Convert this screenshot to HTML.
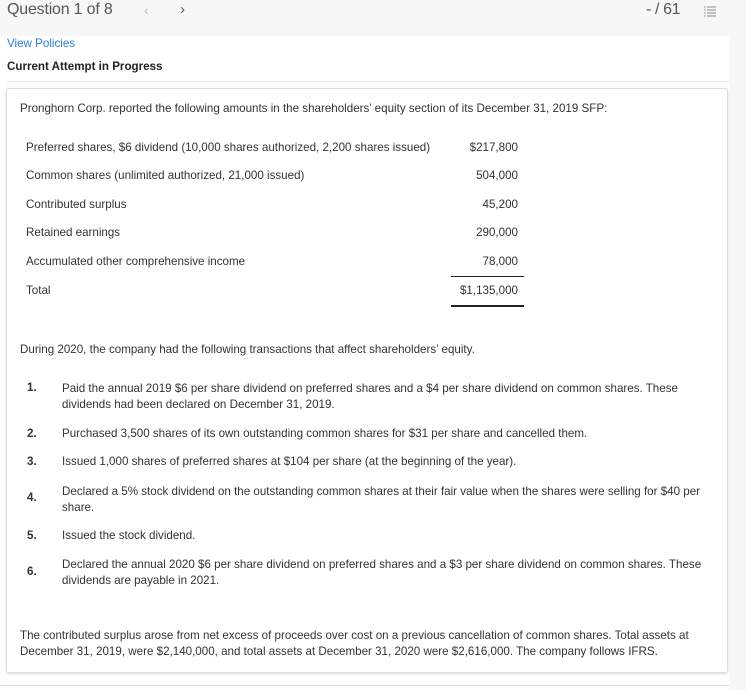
<!DOCTYPE html>
<html><head><style>
body{margin:0;width:746px;height:690px;background:#fff;font-family:"Liberation Sans",sans-serif;color:#333;position:relative;overflow:hidden}
.hdr{position:absolute;left:0;top:0;width:746px;height:36px;background:#f7f7f7}
.a{position:absolute;white-space:nowrap}
.t{font-size:11.6px;letter-spacing:0;color:#333}
.card{position:absolute;left:6px;top:88px;width:720px;height:583px;border:1px solid #ddd;border-radius:3px;box-shadow:0 1px 2px rgba(0,0,0,.15)}
.r{text-align:right;width:110px;left:408px}
</style></head><body>
<div class="hdr"></div>
<div style="position:absolute;left:729px;top:36px;width:17px;height:654px;background:#f7f7f7"></div>
<div class="a" style="left:7px;top:1px;font-size:16px;color:#555;letter-spacing:-0.2px">Question 1 of 8</div>
<div class="a" style="left:144px;top:2px;font-size:14px;color:#bbb">‹</div>
<div class="a" style="left:180px;top:1px;font-size:15px;color:#555">›</div>
<div class="a" style="left:646px;top:1px;font-size:16px;color:#555;letter-spacing:-0.4px">- / 61</div>
<svg class="a" style="left:703px;top:5px" width="14" height="14" viewBox="0 0 14 14"><g stroke="#888" stroke-width="1"><line x1="4" y1="2" x2="13" y2="2"/><line x1="4" y1="5" x2="13" y2="5"/><line x1="4" y1="8" x2="13" y2="8"/><line x1="4" y1="11" x2="13" y2="11"/><line x1="1" y1="2" x2="2.5" y2="2"/><line x1="1" y1="5" x2="2.5" y2="5"/><line x1="1" y1="8" x2="2.5" y2="8"/><line x1="1" y1="11" x2="2.5" y2="11"/></g></svg>
<div class="a t" style="left:7px;top:37px;color:#2a7fd4">View Policies</div>
<div class="a t" style="left:7px;top:60px;color:#222;font-weight:bold">Current Attempt in Progress</div>
<div style="position:absolute;left:7px;top:81px;width:722px;height:1px;background:#e5e5e5"></div>
<div class="card"></div>
<div style="position:absolute;left:0;top:685px;width:729px;height:1px;background:#ddd"></div>
<div class="a t" style="left:20px;top:102px">Pronghorn Corp. reported the following amounts in the shareholders’ equity section of its December 31, 2019 SFP:</div>
<div class="a t" style="left:26px;top:141px">Preferred shares, $6 dividend (10,000 shares authorized, 2,200 shares issued)</div>
<div class="a t r" style="top:141px">$217,800</div>
<div class="a t" style="left:26px;top:169px">Common shares (unlimited authorized, 21,000 issued)</div>
<div class="a t r" style="top:169px">504,000</div>
<div class="a t" style="left:26px;top:198px">Contributed surplus</div>
<div class="a t r" style="top:198px">45,200</div>
<div class="a t" style="left:26px;top:226px">Retained earnings</div>
<div class="a t r" style="top:226px">290,000</div>
<div class="a t" style="left:26px;top:255px">Accumulated other comprehensive income</div>
<div class="a t r" style="top:255px">78,000</div>
<div style="position:absolute;left:451px;top:276px;width:73px;height:1px;background:#222"></div>
<div class="a t" style="left:26px;top:284px">Total</div>
<div class="a t r" style="top:284px">$1,135,000</div>
<div style="position:absolute;left:451px;top:305px;width:73px;height:2px;background:#222"></div>
<div class="a t" style="left:20px;top:343px">During 2020, the company had the following transactions that affect shareholders’ equity.</div>
<div class="a t" style="left:27px;top:381px;font-weight:bold">1.</div>
<div class="a t" style="left:62px;top:381px;line-height:16px">Paid the annual 2019 $6 per share dividend on preferred shares and a $4 per share dividend on common shares. These<br>dividends had been declared on December 31, 2019.</div>
<div class="a t" style="left:27px;top:427px;font-weight:bold">2.</div>
<div class="a t" style="left:62px;top:427px">Purchased 3,500 shares of its own outstanding common shares for $31 per share and cancelled them.</div>
<div class="a t" style="left:27px;top:455px;font-weight:bold">3.</div>
<div class="a t" style="left:62px;top:455px">Issued 1,000 shares of preferred shares at $104 per share (at the beginning of the year).</div>
<div class="a t" style="left:27px;top:491px;font-weight:bold">4.</div>
<div class="a t" style="left:62px;top:484px;line-height:16px">Declared a 5% stock dividend on the outstanding common shares at their fair value when the shares were selling for $40 per<br>share.</div>
<div class="a t" style="left:27px;top:529px;font-weight:bold">5.</div>
<div class="a t" style="left:62px;top:529px">Issued the stock dividend.</div>
<div class="a t" style="left:27px;top:565px;font-weight:bold">6.</div>
<div class="a t" style="left:62px;top:557px;line-height:16px">Declared the annual 2020 $6 per share dividend on preferred shares and a $3 per share dividend on common shares. These<br>dividends are payable in 2021.</div>
<div class="a t" style="left:20px;top:628px;line-height:16px">The contributed surplus arose from net excess of proceeds over cost on a previous cancellation of common shares. Total assets at<br>December 31, 2019, were $2,140,000, and total assets at December 31, 2020 were $2,616,000. The company follows IFRS.</div>
</body></html>
